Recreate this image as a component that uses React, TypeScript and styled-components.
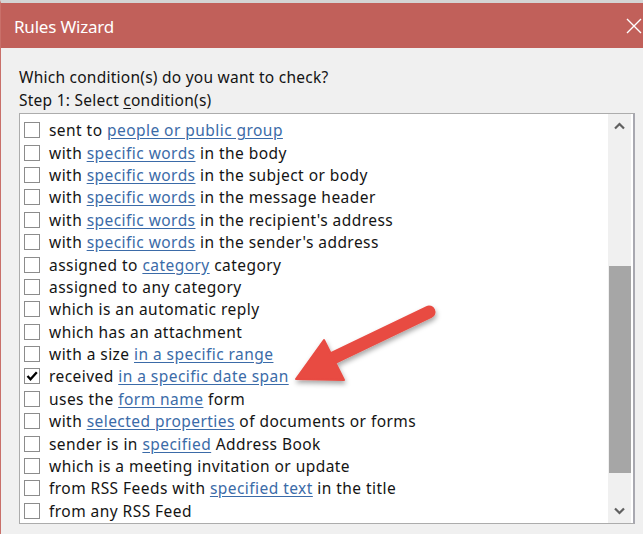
import React from "react";
import styled, { createGlobalStyle } from "styled-components";

const GlobalStyle = createGlobalStyle`
  html, body {
    margin: 0;
    padding: 0;
    background: #f0f0f0;
  }
  body {
    font-family: "Noto Sans", "Open Sans", sans-serif;
  }
`;

const Window = styled.div`
  position: relative;
  width: 643px;
  height: 534px;
  box-sizing: border-box;
  border-top: 3px solid #d4d4d4;
  border-left: 1px solid #c9706a;
  background: #f0f0f0;
  overflow: hidden;
  display: flex;
  flex-direction: column;
`;

const TitleBar = styled.div`
  height: 45px;
  flex: none;
  background: #c1605a;
  display: flex;
  align-items: center;
  justify-content: space-between;
  padding: 1px 0 0 13px;
  box-sizing: border-box;
`;

const Title = styled.span`
  color: #ffffff;
  font-size: 17px;
  letter-spacing: -0.2px;
`;

const CloseGlyph = styled.svg`
  width: 16px;
  height: 16px;
  margin-right: 1px;
`;

const Body = styled.div`
  flex: 1;
  display: flex;
  flex-direction: column;
  padding: 18px 8px 0 18px;
`;

const Prompt = styled.div`
  font-size: 15.5px;
  line-height: 23px;
  color: #141414;
  letter-spacing: 0.25px;
`;

const Mnemonic = styled.span`
  text-decoration: underline;
  text-underline-offset: 2px;
`;

const ListBox = styled.div`
  margin-top: 1px;
  height: 411px;
  box-sizing: border-box;
  border: 1px solid #acacac;
  border-right: 2px solid #a8a8b0;
  background: #ffffff;
  display: flex;
`;

const Rows = styled.div`
  flex: 1;
  padding-top: 5px;
`;

const Row = styled.div`
  height: 22.4px;
  display: flex;
  align-items: center;
  padding-left: 4px;
  font-size: 15.5px;
  color: #141414;
  white-space: nowrap;
  letter-spacing: 0.45px;
`;

const Box = styled.span`
  width: 14px;
  height: 14px;
  flex: none;
  border: 1px solid #8c8c8c;
  background: #ffffff;
  margin-right: 9px;
  display: flex;
  align-items: center;
  justify-content: center;
`;

const Label = styled.span`
  white-space: pre;
`;

const Link = styled.span`
  color: #3b6ba8;
  text-decoration: underline;
  text-decoration-color: #3b6ba8;
  text-underline-offset: 2px;
`;

const ScrollBar = styled.div`
  width: 23px;
  flex: none;
  margin-right: 2px;
  background: #f0f0f0;
  display: flex;
  flex-direction: column;
`;

const ScrollButton = styled.div`
  height: 24px;
  flex: none;
  display: flex;
  align-items: center;
  justify-content: center;
`;

const Track = styled.div`
  flex: 1;
  display: flex;
  flex-direction: column;
`;

const Thumb = styled.div`
  margin-left: 1px;
  width: 22px;
  background: #a6a6a6;
`;

const ArrowOverlay = styled.svg`
  position: absolute;
  left: 0;
  top: 0;
  pointer-events: none;
`;

type Part = { text: string; link?: boolean };

const rows: { parts: Part[]; checked?: boolean }[] = [
  { parts: [{ text: "sent to " }, { text: "people or public group", link: true }] },
  { parts: [{ text: "with " }, { text: "specific words", link: true }, { text: " in the body" }] },
  { parts: [{ text: "with " }, { text: "specific words", link: true }, { text: " in the subject or body" }] },
  { parts: [{ text: "with " }, { text: "specific words", link: true }, { text: " in the message header" }] },
  { parts: [{ text: "with " }, { text: "specific words", link: true }, { text: " in the recipient's address" }] },
  { parts: [{ text: "with " }, { text: "specific words", link: true }, { text: " in the sender's address" }] },
  { parts: [{ text: "assigned to " }, { text: "category", link: true }, { text: " category" }] },
  { parts: [{ text: "assigned to any category" }] },
  { parts: [{ text: "which is an automatic reply" }] },
  { parts: [{ text: "which has an attachment" }] },
  { parts: [{ text: "with a size " }, { text: "in a specific range", link: true }] },
  { parts: [{ text: "received " }, { text: "in a specific date span", link: true }], checked: true },
  { parts: [{ text: "uses the " }, { text: "form name", link: true }, { text: " form" }] },
  { parts: [{ text: "with " }, { text: "selected properties", link: true }, { text: " of documents or forms" }] },
  { parts: [{ text: "sender is in " }, { text: "specified", link: true }, { text: " Address Book" }] },
  { parts: [{ text: "which is a meeting invitation or update" }] },
  { parts: [{ text: "from RSS Feeds with " }, { text: "specified text", link: true }, { text: " in the title" }] },
  { parts: [{ text: "from any RSS Feed" }] },
];

const Check = () => (
  <svg width="12" height="12" viewBox="0 0 12 12">
    <path d="M1.5 6 L4.5 9.3 L10.8 2.2" fill="none" stroke="#000" strokeWidth="2.3" />
  </svg>
);

const Chevron = ({ down }: { down?: boolean }) => (
  <svg width="11" height="8" viewBox="0 0 11 8">
    <path
      d={down ? "M1 1.5 L5.5 6 L10 1.5" : "M1 6.5 L5.5 2 L10 6.5"}
      fill="none"
      stroke="#606060"
      strokeWidth="2.2"
    />
  </svg>
);

export default function App() {
  return (
    <>
      <GlobalStyle />
      <Window>
        <TitleBar>
          <Title>Rules Wizard</Title>
          <CloseGlyph viewBox="0 0 16 16">
            <path d="M1 1 L15 15 M15 1 L1 15" stroke="#ffffff" strokeWidth="1.4" />
          </CloseGlyph>
        </TitleBar>
        <Body>
          <Prompt>Which condition(s) do you want to check?</Prompt>
          <Prompt>
            Step 1: Select <Mnemonic>c</Mnemonic>ondition(s)
          </Prompt>
          <ListBox>
            <Rows>
              {rows.map((r, i) => (
                <Row key={i}>
                  <Box>{r.checked && <Check />}</Box>
                  <Label>
                    {r.parts.map((p, j) =>
                      p.link ? <Link key={j}>{p.text}</Link> : <span key={j}>{p.text}</span>
                    )}
                  </Label>
                </Row>
              ))}
            </Rows>
            <ScrollBar>
              <ScrollButton>
                <Chevron />
              </ScrollButton>
              <Track>
                <div style={{ height: 128 }} />
                <Thumb style={{ height: 207 }} />
              </Track>
              <ScrollButton>
                <Chevron down />
              </ScrollButton>
            </ScrollBar>
          </ListBox>
        </Body>
        <ArrowOverlay width="643" height="534" viewBox="0 0 643 534">
          <defs>
            <filter id="shadow" x="-20%" y="-20%" width="140%" height="140%">
              <feDropShadow dx="1" dy="3" stdDeviation="2.5" floodColor="#000" floodOpacity="0.35" />
            </filter>
          </defs>
          <g filter="url(#shadow)" fill="#e84b43" stroke="#e84b43">
            <line x1="428" y1="309" x2="330" y2="356" strokeWidth="13" strokeLinecap="round" />
            <polygon points="295,376 323,337 343,377" strokeWidth="2" strokeLinejoin="round" />
          </g>
        </ArrowOverlay>
      </Window>
    </>
  );
}
